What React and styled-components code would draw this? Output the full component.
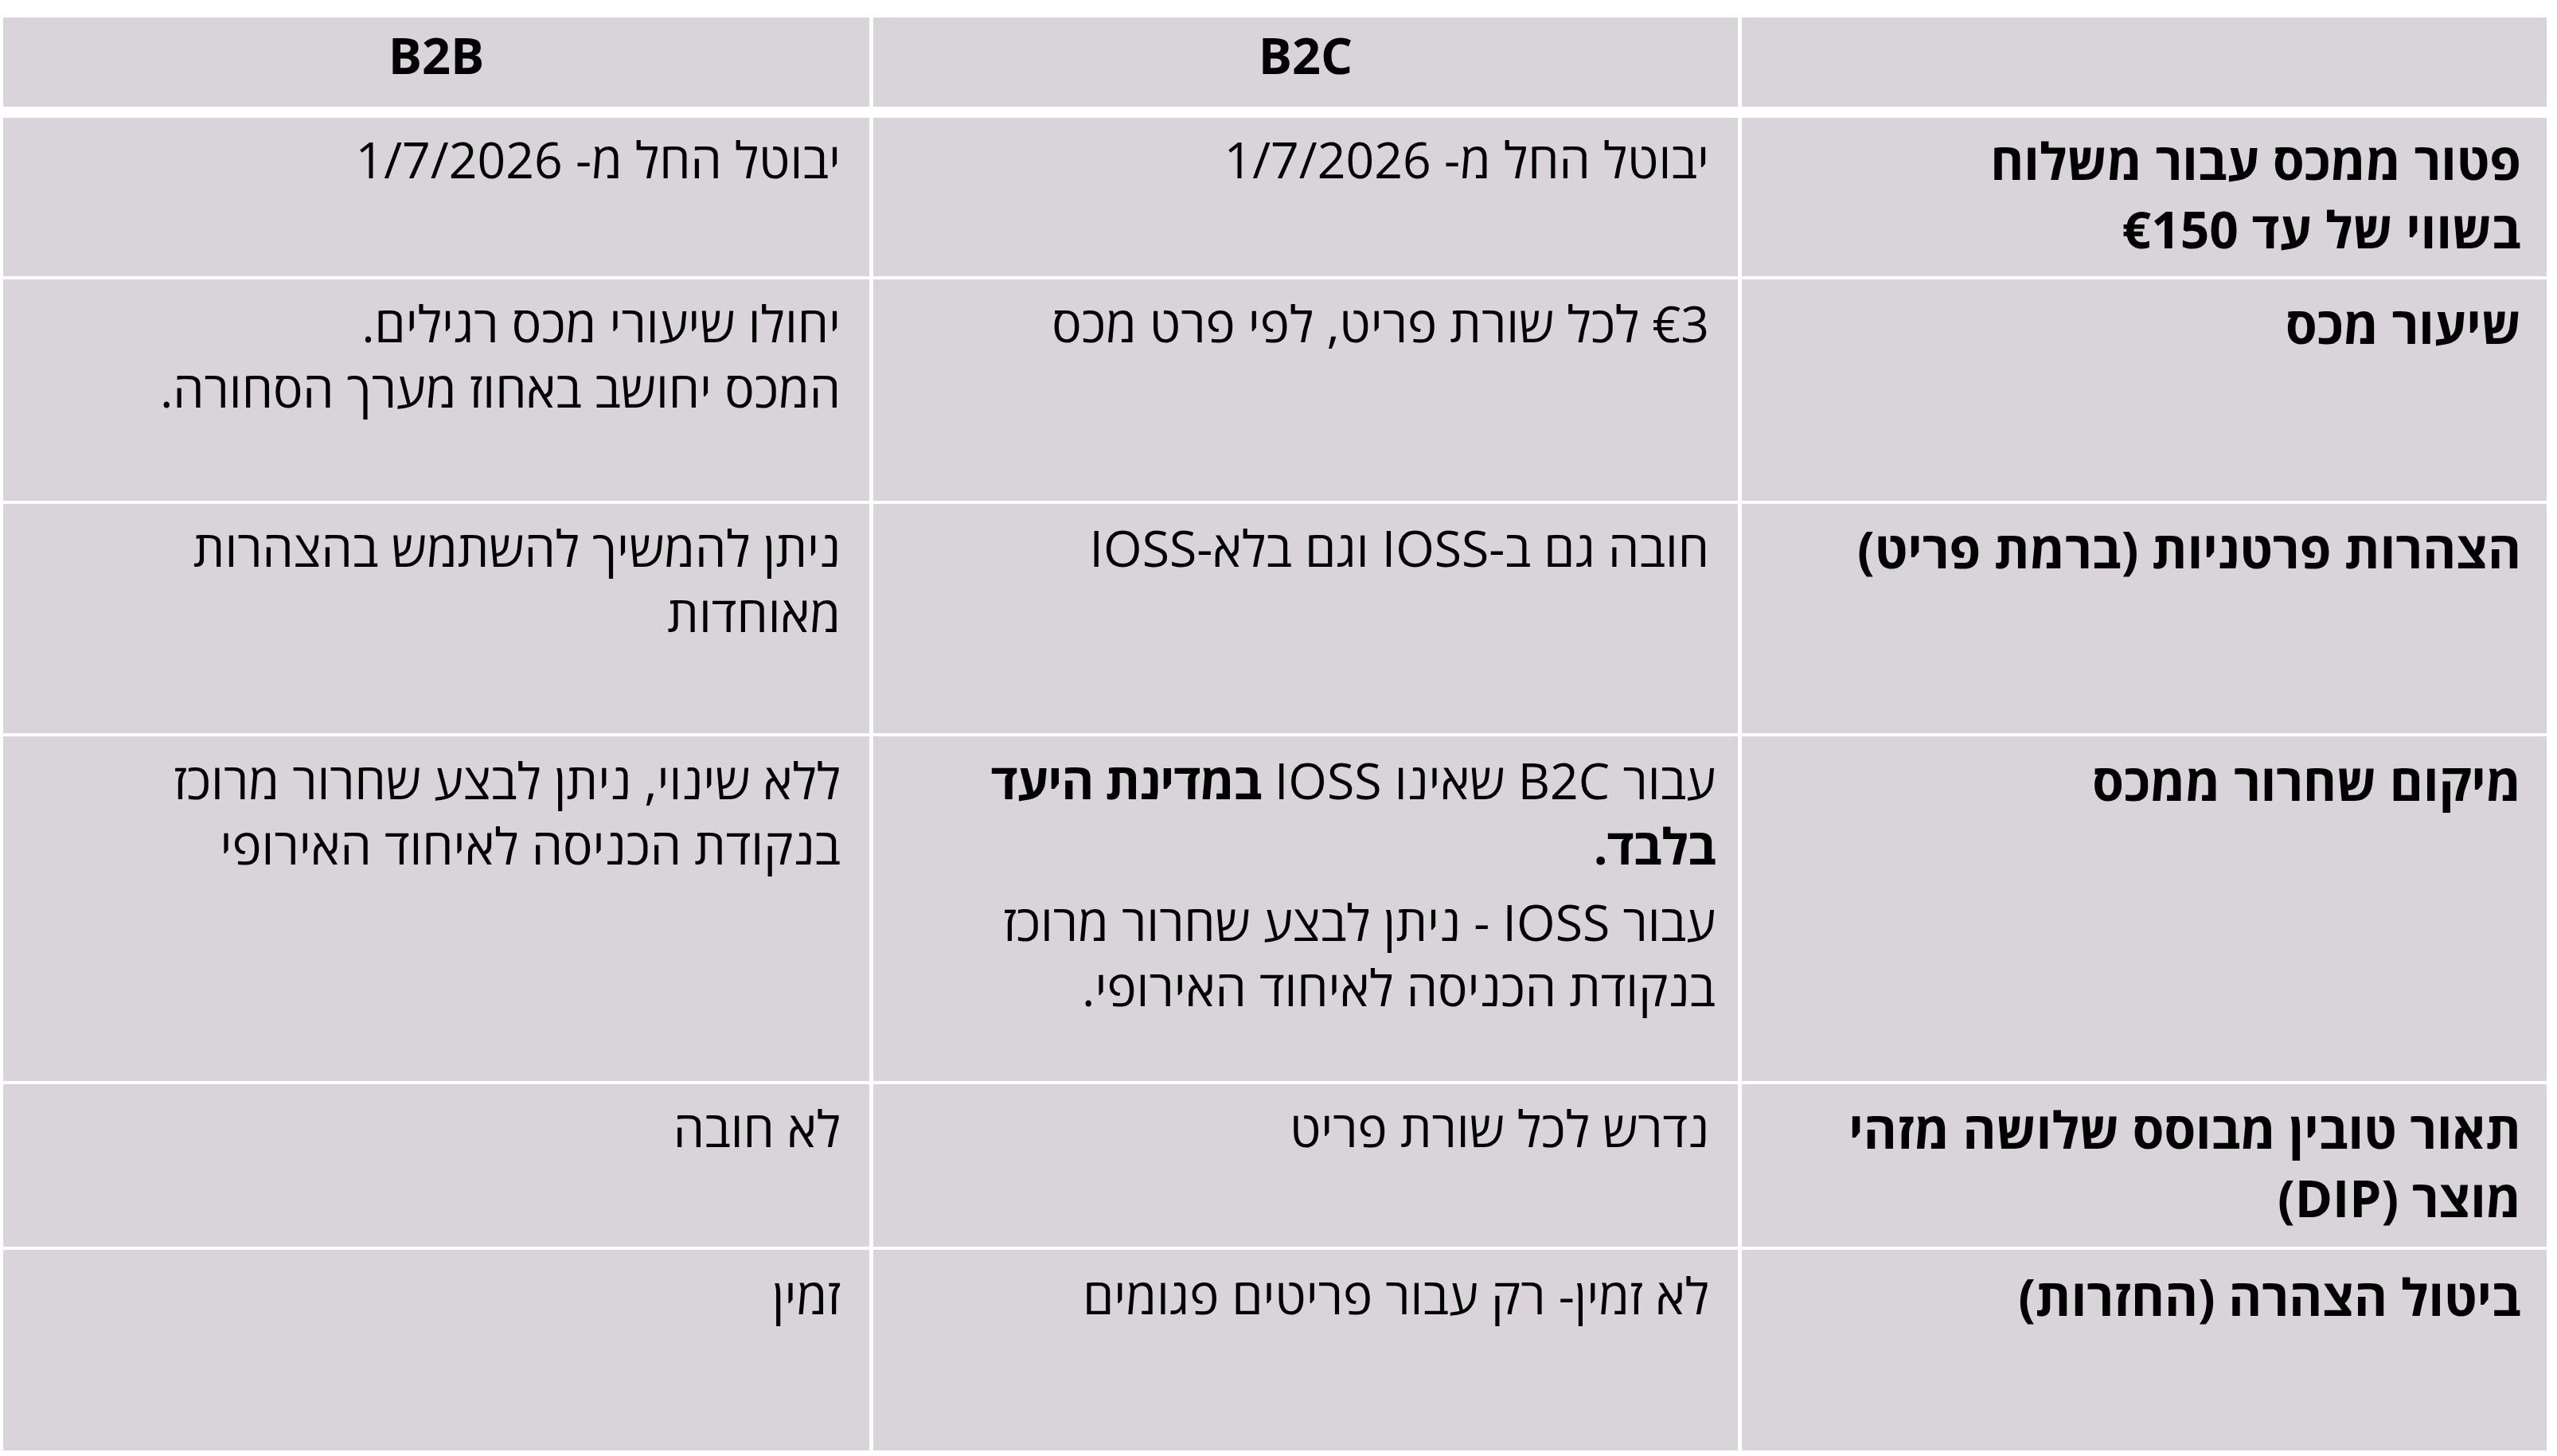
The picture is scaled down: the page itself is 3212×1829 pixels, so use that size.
import React from 'react';
import styled, { createGlobalStyle } from 'styled-components';

const GlobalStyle = createGlobalStyle`
  html, body {
    margin: 0;
    background: #ffffff;
  }
  body {
    font-family: "Open Sans", "Liberation Sans", "DejaVu Sans", sans-serif;
    color: #000000;
  }
`;

const Page = styled.div`
  direction: rtl;
  padding: 22px 13px 7px 4px;
`;

const Table = styled.div`
  display: flex;
  flex-direction: column;
  gap: 4px;
`;

const Row = styled.div`
  display: grid;
  grid-template-columns: 1011px 1086px 1088px;
  column-gap: 5px;
  height: ${props => props.$h}px;
  margin-bottom: ${props => (props.$head ? 10 : 0)}px;
`;

const Cell = styled.div`
  background-color: #d8d4d9;
  padding: ${props => props.$top ?? 14}px ${props => props.$right ?? 36}px 0 30px;
  font-size: 62.5px;
  line-height: 82px;
  text-align: right;
`;

const HeadCell = styled(Cell)`
  padding: 6px 20px 0;
  font-size: 63px;
  font-weight: 700;
  text-align: center;
`;

const Label = styled(Cell)`
  padding: ${props => props.$top ?? 14}px 32px 0 20px;
  font-size: 64px;
  font-weight: 700;
  line-height: 86px;
`;

const Para = styled.p`
  margin: 0 0 14px;

  &:last-child {
    margin-bottom: 0;
  }
`;

const Strong = styled.b`
  font-weight: 700;
  letter-spacing: -1px;
`;

const rows = [
  {
    h: 199,
    top: 11,
    label: <>פטור ממכס עבור משלוח<br />בשווי של עד €150</>,
    b2c: <>יבוטל החל מ- 1/7/2026</>,
    b2b: <>יבוטל החל מ- 1/7/2026</>,
  },
  {
    h: 278,
    label: <>שיעור מכס</>,
    b2c: <>€3 לכל שורת פריט, לפי פרט מכס</>,
    b2b: <>יחולו שיעורי מכס רגילים.<br />המכס יחושב באחוז מערך הסחורה.</>,
  },
  {
    h: 288,
    label: <>הצהרות פרטניות (ברמת פריט)</>,
    b2c: <>חובה גם ב-IOSS וגם בלא-IOSS</>,
    b2b: <>ניתן להמשיך להשתמש בהצהרות<br />מאוחדות</>,
  },
  {
    h: 433,
    b2cRight: 28,
    label: <>מיקום שחרור ממכס</>,
    b2c: (
      <>
        <Para>עבור B2C שאינו IOSS <Strong>במדינת היעד<br />בלבד.</Strong></Para>
        <Para>עבור IOSS - ניתן לבצע שחרור מרוכז<br />בנקודת הכניסה לאיחוד האירופי.</Para>
      </>
    ),
    b2b: <>ללא שינוי, ניתן לבצע שחרור מרוכז<br />בנקודת הכניסה לאיחוד האירופי</>,
  },
  {
    h: 204,
    label: <>תאור טובין מבוסס שלושה מזהי<br />מוצר (DIP)</>,
    b2c: <>נדרש לכל שורת פריט</>,
    b2b: <>לא חובה</>,
  },
  {
    h: 252,
    top: 16,
    label: <>ביטול הצהרה (החזרות)</>,
    b2c: <>לא זמין- רק עבור פריטים פגומים</>,
    b2b: <>זמין</>,
  },
];

export default function App() {
  return (
    <>
      <GlobalStyle />
      <Page>
        <Table>
          <Row $h={112} $head>
            <HeadCell />
            <HeadCell>B2C</HeadCell>
            <HeadCell>B2B</HeadCell>
          </Row>
          {rows.map((r, i) => (
            <Row key={i} $h={r.h}>
              <Label $top={r.top}>{r.label}</Label>
              <Cell $top={r.top} $right={r.b2cRight}>{r.b2c}</Cell>
              <Cell $top={r.top}>{r.b2b}</Cell>
            </Row>
          ))}
        </Table>
      </Page>
    </>
  );
}
